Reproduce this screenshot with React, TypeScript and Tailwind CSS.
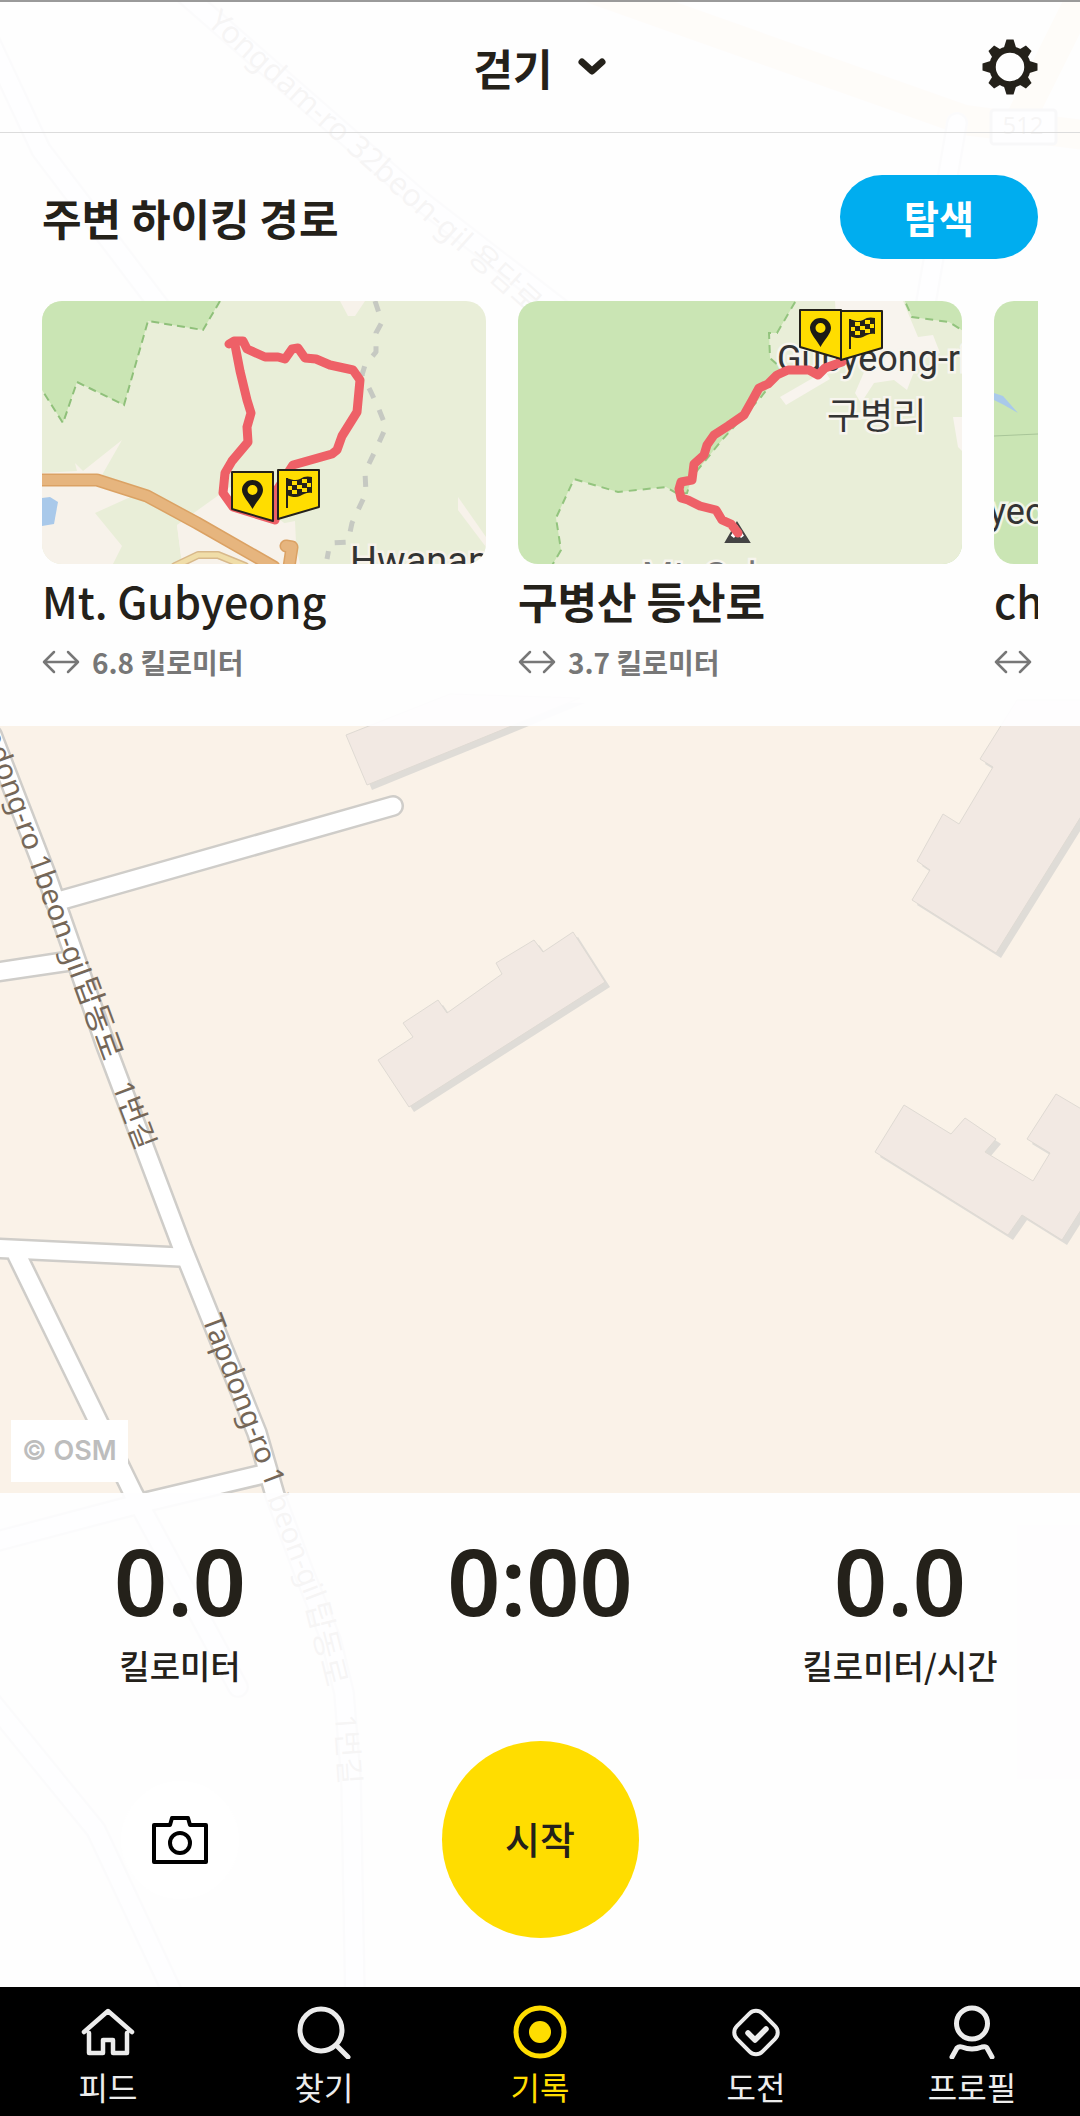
import type { ReactNode } from 'react';

interface Trail {
  id: string;
  name: string;
  nameClass: string;
  distance: string;
  map: ReactNode;
}

interface NavItem {
  id: string;
  label: string;
  icon: ReactNode;
}

const ROADS = [
  'M-8 735 L47 877 L105 1043 L182 1247 L257 1433 L275 1495 L303 1570 L331 1640 L344 1693 L351 1780 L355 2000',
  'M55 902 L393 806',
  'M-10 973 L70 961',
  'M-10 1248 L180 1257',
  'M17 1255 L133 1493 L238 1687',
  'M268 1473 L150 1501 L-10 1543',
  'M-10 1700 L96 1830 L176 2000',
  'M-20 20 L41 150 L170 320',
  'M180 -10 L420 200 L640 370',
  'M957 123 L923 320',
];

const BUILDINGS = [
  '346,735 450,694 580,698 367,785',
  '573,932 605,982 409,1107 378,1060 413,1037 403,1023 438,1000 447,1013 502,974 496,963 534,940 543,952',
  '1017,700 980,759 993,767 959,824 943,814 917,861 930,870 912,900 996,953 1100,786 1100,700',
  '904,1105 951,1134 965,1118 996,1139 985,1152 1033,1181 1050,1153 1027,1139 1056,1094 1100,1120 1100,1180 1062,1240 1022,1215 1008,1235 875,1152',
];

function BaseMap() {
  return (
    <svg
      viewBox="0 0 1080 2116"
      preserveAspectRatio="xMidYMid slice"
      className="absolute inset-0 h-full w-full bg-[#faf2e8]"
      aria-hidden="true"
    >
      {BUILDINGS.map(points => (
        <g key={points}>
          <polygon points={points} fill="#dfdcd7" transform="translate(5 5)" />
          <polygon points={points} fill="#f2e9e3" stroke="#dfdad3" />
        </g>
      ))}
      <g fill="none" strokeLinecap="round" strokeLinejoin="round">
        <path d="M540 -30 L964 120 L1100 137 M1085 -10 L1020 120" stroke="#fbd49c" strokeWidth="30" />
        {ROADS.map(d => (
          <path key={d} d={d} stroke="#cfcdc9" strokeWidth="22" />
        ))}
        {ROADS.map(d => (
          <path key={d} d={d} stroke="#ffffff" strokeWidth="17" />
        ))}
      </g>
      <rect x="991" y="110" width="65" height="34" rx="3" fill="#fff" stroke="#999" strokeWidth="3" />
      <g
        fill="#756758"
        fontSize="29"
        className="[font-family:'Noto_Sans','Noto_Sans_CJK_KR',sans-serif]"
      >
        <text x="1023" y="134" fontSize="24" textAnchor="middle">512</text>
        <text transform="translate(206 24) rotate(42)" fontSize="31">Yongdam-ro 32beon-gil 용담로</text>
        <text transform="translate(72 980) rotate(70)" textAnchor="end">Tapdong-ro 1beon-gil</text>
        <text transform="translate(74 982) rotate(70)" fontSize="31">탑동로</text>
        <text transform="translate(112 1086) rotate(69)" fontSize="29">1번길</text>
        <text transform="translate(202 1319) rotate(69)">Tapdong-ro 1</text>
        <text transform="translate(267 1498) rotate(69)">beon-gil</text>
        <text transform="translate(306 1605) rotate(76)" fontSize="31">탑동로</text>
        <text transform="translate(335 1715) rotate(86)" fontSize="29">1번길</text>
      </g>
    </svg>
  );
}

function StartMarker({ x, y }: { x: number; y: number }) {
  return (
    <g transform={`translate(${x} ${y})`}>
      <path d="M0 0 H41 V49 L0 37 Z" fill="#ffdd00" stroke="#24211a" strokeWidth="2" strokeLinejoin="round" />
      <path
        fillRule="evenodd"
        d="M20.500 8 C14 8 10 13 10 18 C10 24 17 30 20.500 37 C24 30 31 24 31 18 C31 13 27 8 20.500 8 Z M20.500 13 A5 5 0 1 1 20.500 23 A5 5 0 1 1 20.500 13 Z"
        fill="#1b1a16"
      />
    </g>
  );
}

function FinishMarker({ x, y }: { x: number; y: number }) {
  return (
    <g transform={`translate(${x} ${y})`}>
      <path d="M0 0 H41 V37 L0 49 Z" fill="#ffdd00" stroke="#24211a" strokeWidth="2" strokeLinejoin="round" />
      <path d="M9 8 V38" stroke="#24211a" strokeWidth="2" />
      <path d="M8 8 C15 10 18 11 22 9 C26 6 30 6 34 7 V23 C29 22 26 24 22 26 C18 28 14 27 8 25 Z" fill="#24211a" />
      <path
        d="M14 11 h5 v4 h-5z M24 9 h5 v4 h-5z M10 16 h4 v4 h-4z M19 15 h5 v4 h-5z M29 13 h4 v4 h-4z M14 20 h5 v4 h-5z M24 18 h5 v4 h-5z"
        fill="#ffdd00"
      />
    </g>
  );
}

const mapLabel = "[font-family:Roboto,'Noto_Sans_CJK_KR',sans-serif] [paint-order:stroke]";

function GubyeongMap() {
  return (
    <svg viewBox="0 0 444 263" preserveAspectRatio="xMidYMid slice" className="h-full w-full bg-[#e9eed8]" aria-hidden="true">
      <path d="M0 0 H178 L161 29 L106 20 L82 104 L35 81 L21 122 L0 89 Z" fill="#cae5b4" />
      <path d="M178 0 L161 29 L106 20 L82 104 L35 81 L21 122 L0 89" fill="none" stroke="#8fc07a" strokeWidth="2" strokeDasharray="8 5" />
      <g fill="#f7f2ea">
        <path d="M0 172 L35 170 L33 162 L41 170 L80 139 L60 174 L105 189 L84 198 L53 212 L80 245 L71 263 H0 Z" />
        <path d="M135 224 L188 186 L233 215 L250 228 L258 263 H140 Z" />
        <path d="M298 0 L306 15 H313 L323 0 Z" />
        <path d="M416 196 L444 236 V246 L416 209 Z" />
        <path d="M135 224 L150 218 L213 228 L253 220 L255 263 H140 Z" />
      </g>
      <path d="M0 197 L8 196 L16 201 L12 223 L0 225 Z" fill="#a9c9ea" />
      <g fill="none" strokeLinejoin="round" strokeLinecap="round">
        <path d="M133 265 L156 254 H176 L203 265" stroke="#d8b98b" strokeWidth="8" />
        <path d="M133 265 L156 254 H176 L203 265" stroke="#f0dda8" strokeWidth="5" />
        <path d="M-5 179 H55 L105 195 L155 222 L232 266 M244 245 L250 246 L247 266" stroke="#dba264" strokeWidth="13" />
        <path d="M-5 179 H55 L105 195 L155 222 L232 266 M244 245 L250 246 L247 266" stroke="#e6b57e" strokeWidth="10" />
        <path
          d="M333 0 L340 21 L334 32 V51 L323 64 L320 74 L328 89 L336 106 L344 126 L335 146 L323 171 L324 192 L310 222 L306 241 L288 242 L285 258"
          stroke="#c6c9c2"
          strokeWidth="5"
          strokeDasharray="11 13"
          strokeLinecap="butt"
        />
        <path
          d="M187 43 L192 40 L201 40 L205 48 L223 56 L236 56 L243 58 L250 48 L256 47 L263 57 L274 58 L288 64 L311 69 L318 79 L315 111 L300 135 L295 149 L290 153 L251 164 L235 189 L233 219 M193 44 L198 70 L205 99 L209 112 L205 126 L206 141 L190 160 L183 172 L181 192 L191 206 L233 219"
          stroke="#ee6067"
          strokeWidth="9"
        />
      </g>
      <StartMarker x={190} y={171} />
      <FinishMarker x={236} y={169} />
      <text x="308" y="273" fontSize="38" fill="#333" stroke="#f7f2ea" strokeWidth="5" className={mapLabel}>Hwanan</text>
    </svg>
  );
}

function GubyeongsanMap() {
  return (
    <svg viewBox="0 0 444 263" preserveAspectRatio="xMidYMid slice" className="h-full w-full bg-[#cae5b4]" aria-hidden="true">
      <path
        d="M32 268 L43 249 L38 217 L56 178 L100 191 L148 186 L160 193 L169 192 L174 176 L204 139 L243 96 L254 82 L263 67 L252 57 L251 32 L259 32 L280 -4 H385 L394 16 L431 21 L450 33 V268 Z"
        fill="#e9eed8"
        stroke="#93c47e"
        strokeWidth="2"
        strokeDasharray="8 6"
      />
      <g fill="#f8f4ee">
        <path d="M317 0 H385 L400 36 L415 34 L422 52 L400 60 L389 89 L376 79 L356 82 L343 102 L337 92 L350 62 L320 50 Z" />
        <path d="M262 96 L307 70 L312 78 L268 104 Z" />
        <path d="M435 116 H444 V150 L440 146 Z" />
      </g>
      <g fill="#333" stroke="#f7f5ee" strokeWidth="5" fontSize="36" className={mapLabel}>
        <text x="259" y="70">Gubyeong-ri</text>
        <text x="309" y="128">구병리</text>
        <text x="124" y="287" fill="#777">Mt. Gubyeong</text>
      </g>
      <path d="M208 241 L219 222 L231 241 Z" fill="#fff" stroke="#444" strokeWidth="2" />
      <path d="M208 241 L212 234 L216 237 L219 233 L223 237 L227 234 L231 241 Z" fill="#444" />
      <path
        d="M324 61 L307 67 L300 74 L291 69 L270 69 L259 74 L250 83 L241 87 L235 98 L226 114 L210 125 L196 134 L189 144 L186 154 L176 163 L174 179 L163 181 L161 188 L163 197 L170 199 L182 205 L198 209 L204 219 L213 223 L220 232"
        fill="none"
        stroke="#ee6067"
        strokeWidth="9"
        strokeLinecap="round"
        strokeLinejoin="round"
      />
      <StartMarker x={282} y={9} />
      <FinishMarker x={323} y={10} />
    </svg>
  );
}

function ForestMap() {
  return (
    <svg viewBox="0 0 444 263" preserveAspectRatio="xMidYMid slice" className="h-full w-full bg-[#cae5b4]" aria-hidden="true">
      <path d="M0 92 L9 95 L24 112 L10 104 L0 99 Z" fill="#a9c9ea" />
      <path d="M0 135 L44 133 L120 128" fill="none" stroke="#a8c598" />
      <text x="-5" y="223" fontSize="36" fill="#333" stroke="#f1f5e8" strokeWidth="5" className={mapLabel}>yeong</text>
    </svg>
  );
}

function GearIcon() {
  return (
    <svg viewBox="0 0 56 56" className="size-14" fill="#24211a" aria-hidden="true">
      <circle cx="28" cy="28" r="17.500" fill="none" stroke="#24211a" strokeWidth="6.500" />
      {[0, 90, 180, 270].map(angle => (
        <path key={angle} d="M24.500 0.500 H31.500 L34.500 10 H21.500 Z" transform={`rotate(${angle} 28 28)`} />
      ))}
      {[45, 135, 225, 315].map(angle => (
        <path key={angle} d="M24 1.500 H32 L34 10 H22 Z" transform={`rotate(${angle} 28 28)`} />
      ))}
    </svg>
  );
}

function DistanceIcon() {
  return (
    <svg viewBox="0 0 38 24" className="h-6 w-[38px] shrink-0" fill="none" stroke="#777" strokeWidth="2.500" strokeLinecap="round" strokeLinejoin="round" aria-hidden="true">
      <path d="M2 12 H36 M12 2 L2 12 L12 22 M26 2 L36 12 L26 22" />
    </svg>
  );
}

const trails: Trail[] = [
  { id: 'gubyeong', name: 'Mt. Gubyeong', nameClass: 'font-medium', distance: '6.8 킬로미터', map: <GubyeongMap /> },
  { id: 'gubyeongsan', name: '구병산 등산로', nameClass: 'font-bold', distance: '3.7 킬로미터', map: <GubyeongsanMap /> },
  { id: 'ch', name: 'ch', nameClass: 'font-medium', distance: '', map: <ForestMap /> },
];

const stats = [
  { id: 'distance', value: '0.0', unit: '킬로미터' },
  { id: 'time', value: '0:00', unit: '' },
  { id: 'speed', value: '0.0', unit: '킬로미터/시간' },
];

const navItems: NavItem[] = [
  {
    id: 'feed',
    label: '피드',
    icon: <path d="M3 27 L27 6 L51 27 M8 28 V48 H22 V35 H32 V48 H46 V28" strokeWidth="4.500" />,
  },
  {
    id: 'search',
    label: '찾기',
    icon: <path d="M45 25 A21 21 0 1 1 3 25 A21 21 0 1 1 45 25 M40 41 L51 52" strokeWidth="5" />,
  },
  {
    id: 'record',
    label: '기록',
    icon: (
      <>
        <circle cx="27" cy="27" r="24" strokeWidth="5" />
        <circle cx="27" cy="27" r="11" fill="currentColor" stroke="none" />
      </>
    ),
  },
  {
    id: 'challenge',
    label: '도전',
    icon: (
      <>
        <rect x="9" y="9.500" width="36" height="36" rx="9" strokeWidth="4" transform="rotate(45 27 27.500)" />
        <path d="M19 28 L26 35 L37 24" strokeWidth="5.500" />
      </>
    ),
  },
  {
    id: 'profile',
    label: '프로필',
    icon: (
      <>
        <circle cx="27" cy="18.500" r="15.500" strokeWidth="5" />
        <path d="M7 52 L12 43 Q14 41 17 42 Q27 46 37 42 Q41 41 42 43 L47 52" strokeWidth="5" />
      </>
    ),
  },
];

const ACTIVE_TAB = 'record';

export default function App() {
  return (
    <div className="relative flex min-h-screen flex-col overflow-hidden text-[#24211a] [font-family:'Noto_Sans_CJK_KR','Noto_Sans',sans-serif]">
      <BaseMap />

      <header className="relative grid h-[133px] grid-cols-3 items-center border-t-2 border-b border-t-[#9a9a9a] border-b-[#dcdcdc] bg-[#fefeff]/94 px-[42px]">
        <button type="button" className="col-start-2 flex items-center justify-center gap-6 text-[43px] leading-[52px] font-bold">
          걷기
          <svg viewBox="0 0 30 20" className="h-5 w-[30px]" fill="none" stroke="currentColor" strokeWidth="7" strokeLinecap="round" strokeLinejoin="round" aria-hidden="true">
            <path d="M5 5 L15 14 L25 5" />
          </svg>
        </button>
        <button type="button" aria-label="설정" className="justify-self-end">
          <GearIcon />
        </button>
      </header>

      <section className="relative bg-[#fefeff]/94 px-[42px] pt-[42px] pb-11">
        <div className="flex items-center justify-between">
          <h1 className="text-[43px] leading-[52px] font-bold">주변 하이킹 경로</h1>
          <button type="button" className="h-[84px] rounded-full bg-[#00adef] px-16 text-[38px] leading-[52px] font-bold text-white">
            탐색
          </button>
        </div>

        <ul className="mt-[42px] flex gap-8 overflow-hidden">
          {trails.map(trail => (
            <li key={trail.id} className="w-[444px] shrink-0">
              <a href={`#${trail.id}`} className="block">
                <div className="h-[263px] overflow-hidden rounded-[20px]">{trail.map}</div>
                <h2 className={`mt-[10px] text-[43px] leading-[52px] ${trail.nameClass}`}>{trail.name}</h2>
                <p className="mt-4 flex h-10 items-center gap-3 text-[28px] leading-10 font-bold text-[#777]">
                  <DistanceIcon />
                  {trail.distance}
                </p>
              </a>
            </li>
          ))}
        </ul>
      </section>

      <main className="relative flex flex-1 items-end p-[11px]">
        <a href="#osm" className="bg-white px-[11px] py-2 text-[27px] leading-[46px] font-semibold text-[#bdbdbd] [font-family:Inter,sans-serif]">
          © OSM
        </a>
      </main>

      <section className="relative bg-[#fefeff]/94 pt-10 pb-[49px]">
        <dl className="grid grid-cols-3 text-center">
          {stats.map(stat => (
            <div key={stat.id} className="flex flex-col-reverse justify-end">
              <dt className="mt-[18px] text-[33px] leading-10 font-medium">{stat.unit}</dt>
              <dd className="text-[93px] leading-[94px] font-semibold [font-family:'Noto_Sans',sans-serif]">{stat.value}</dd>
            </div>
          ))}
        </dl>
        <div className="mt-14 grid grid-cols-3 place-items-center">
          <button type="button" aria-label="카메라" className="flex size-[118px] items-center justify-center rounded-full bg-white">
            <svg viewBox="0 0 60 60" className="size-[60px]" fill="none" stroke="#000" strokeWidth="4" strokeLinejoin="round" aria-hidden="true">
              <path d="M4 15 H20 L22 8 H38 L40 15 H56 V52 H4 Z" />
              <circle cx="30" cy="33" r="10" />
            </svg>
          </button>
          <button type="button" className="size-[197px] rounded-full bg-[#ffdd00] pb-1 text-[38px] font-medium">
            시작
          </button>
        </div>
      </section>

      <nav className="relative grid grid-cols-5 bg-black pt-[18px] pb-3">
        {navItems.map(item => (
          <a
            key={item.id}
            href={`#${item.id}`}
            aria-current={item.id === ACTIVE_TAB ? 'page' : undefined}
            className={`flex flex-col items-center gap-[9px] text-[32px] leading-9 ${
              item.id === ACTIVE_TAB ? 'text-[#ffdd00]' : 'text-[#ececec]'
            }`}
          >
            <svg viewBox="0 0 54 54" className="size-[54px]" fill="none" stroke="currentColor" strokeLinecap="round" strokeLinejoin="round" aria-hidden="true">
              {item.icon}
            </svg>
            {item.label}
          </a>
        ))}
      </nav>
    </div>
  );
}
